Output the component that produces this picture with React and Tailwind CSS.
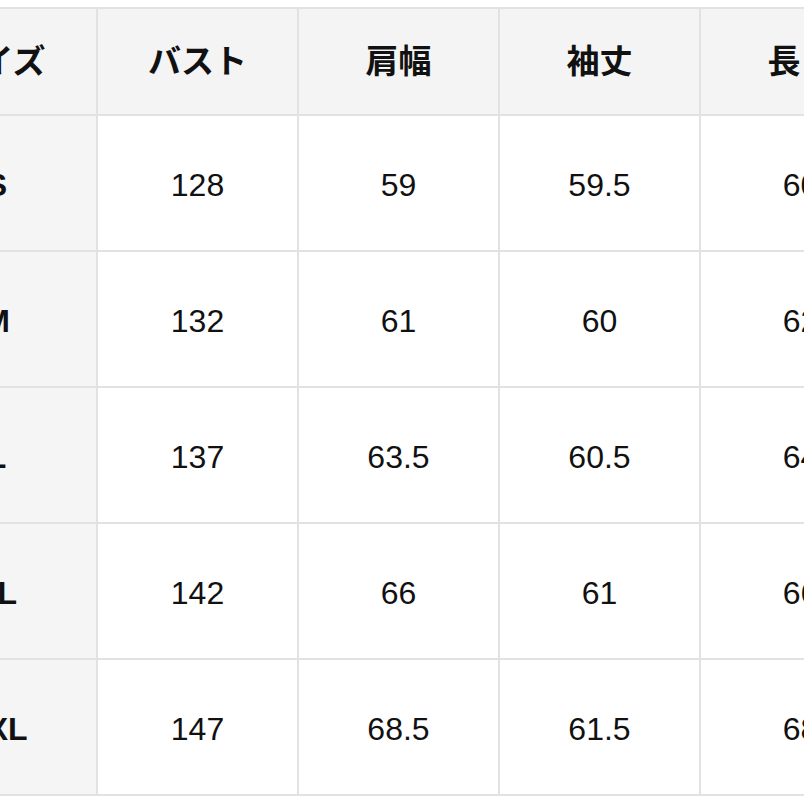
const headers = ["サイズ", "バスト", "肩幅", "袖丈", "長さ"];

const rows = [
  ["S", "128", "59", "59.5", "60"],
  ["M", "132", "61", "60", "62"],
  ["L", "137", "63.5", "60.5", "64"],
  ["XL", "142", "66", "61", "66"],
  ["XXL", "147", "68.5", "61.5", "68"],
];

export default function App() {
  return (
    <div className="w-[804px] h-[804px] overflow-hidden bg-white pt-[7px]">
      <div
        className="ml-[-105px] w-[1010px] grid grid-cols-[repeat(5,201px)] border-t-2 border-l-2 border-[#e2e2e2] text-[#111]"
        style={{ fontFamily: '"Liberation Sans", "Noto Sans CJK JP", sans-serif' }}
      >
        {headers.map((h) => (
          <div
            key={h}
            className="h-[107px] pb-[4px] flex items-center justify-center bg-[#f4f4f4] border-r-2 border-b-2 border-[#e2e2e2] text-[33px] font-bold"
            style={{ fontFamily: '"Noto Sans CJK JP", sans-serif' }}
          >
            {h}
          </div>
        ))}
        {rows.map((row) =>
          row.map((cell, i) => (
            <div
              key={row[0] + i}
              className={
                i === 0
                  ? "h-[136px] pt-[3px] flex items-center justify-center bg-[#f5f5f5] border-r-2 border-b-2 border-[#e2e2e2] text-[32px] font-bold"
                  : "h-[136px] pt-[3px] flex items-center justify-center bg-white border-r-2 border-b-2 border-[#e2e2e2] text-[32px]"
              }
            >
              {cell}
            </div>
          ))
        )}
      </div>
    </div>
  );
}
